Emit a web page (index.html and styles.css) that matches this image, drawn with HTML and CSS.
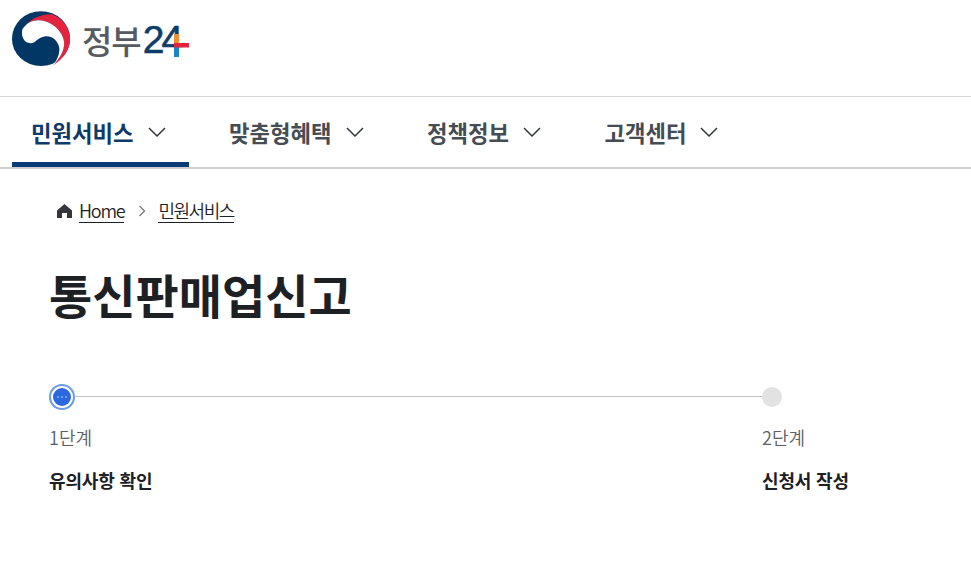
FILE: index.html
```html
<!DOCTYPE html>
<html lang="ko">
<head>
<meta charset="utf-8">
<title>통신판매업신고</title>
<link rel="stylesheet" href="styles.css">
</head>
<body>
<header class="top">
  <a class="logo">
    <svg class="mark" width="66" height="66" viewBox="0 0 200 200">
      <ellipse cx="100" cy="99" rx="88" ry="83" fill="#003764"/>
      <path d="M44 70C62 40 100 24 132 25C168 36 190 70 188 105C186 135 165 162 135 181C155 162 172 135 170 110C168 80 135 45 95 43C75 42 55 52 44 70Z" fill="#e4233f"/>
      <path d="M44 70C38 90 48 113 68 113C85 113 92 93 115 92C135 91 150 105 155 125C158 140 150 165 135 181C155 162 172 135 170 110C168 80 135 45 95 43C75 42 55 52 44 70Z" fill="#fff"/>
    </svg>
    <span class="logo-ko">정부</span><span class="logo-num">24</span>
    <svg class="plus" width="15" height="23" viewBox="0 0 15 23">
      <rect x="0" y="0" width="5" height="10" fill="#ee8f33"/>
      <rect x="0" y="13" width="5" height="10" fill="#1b84c4"/>
      <rect x="0" y="9" width="15" height="4.500" fill="#e4233f"/>
    </svg>
  </a>
</header>
<nav class="gnb">
  <a class="tab active"><span>민원서비스</span><svg class="chev" width="18" height="10" viewBox="0 0 18 10"><path d="M1 1l8 8 8-8" fill="none" stroke="currentColor" stroke-width="1.500"/></svg></a>
  <a class="tab"><span>맞춤형혜택</span><svg class="chev" width="18" height="10" viewBox="0 0 18 10"><path d="M1 1l8 8 8-8" fill="none" stroke="currentColor" stroke-width="1.500"/></svg></a>
  <a class="tab"><span>정책정보</span><svg class="chev" width="18" height="10" viewBox="0 0 18 10"><path d="M1 1l8 8 8-8" fill="none" stroke="currentColor" stroke-width="1.500"/></svg></a>
  <a class="tab"><span>고객센터</span><svg class="chev" width="18" height="10" viewBox="0 0 18 10"><path d="M1 1l8 8 8-8" fill="none" stroke="currentColor" stroke-width="1.500"/></svg></a>
</nav>
<main class="content">
  <div class="crumbs">
    <svg class="home" width="15" height="14" viewBox="0 0 15 14"><path d="M7.500 0L0 6.500V14h5V9h5v5h5V6.500z" fill="#33363d"/></svg>
    <a class="crumb crumb-en">Home</a>
    <svg class="sep" width="8" height="12" viewBox="0 0 8 12"><path d="M1.500 1l5 5-5 5" fill="none" stroke="#777" stroke-width="1.300"/></svg>
    <a class="crumb">민원서비스</a>
  </div>
  <h1 class="title">통신판매업신고</h1>
  <ol class="steps">
    <li class="step step-first">
      <div class="track">
        <span class="dot-now"><span class="dot-core"><i></i><i></i><i></i></span></span>
        <span class="line"></span>
      </div>
      <p class="num">1단계</p>
      <p class="name">유의사항 확인</p>
    </li>
    <li class="step">
      <div class="track">
        <span class="dot-next"></span>
      </div>
      <p class="num">2단계</p>
      <p class="name">신청서 작성</p>
    </li>
  </ol>
</main>
</body>
</html>
```
FILE: styles.css
```css
* { box-sizing: border-box; }
html, body { margin: 0; padding: 0; background: #fff; }
body { font-family: "Noto Sans CJK KR", "Noto Sans", sans-serif; color: #1e2124; overflow: hidden; }

.top { height: 97px; border-bottom: 1px solid #d6d6d6; padding: 6px 0 0 8px; }
.logo { display: flex; align-items: flex-start; }
.mark { flex: none; }
.logo-ko { margin: 12px 0 0 8px; font-size: 33px; line-height: 44px; color: #565b60; font-weight: 500; letter-spacing: -1px; }
.logo-num { margin: 11px 0 0 2px; font-family: "Liberation Sans", sans-serif; font-size: 39px; line-height: 46px; color: #0e3d6b; letter-spacing: -3px; -webkit-text-stroke: .6px #0e3d6b; }
.plus { margin: 28px 0 0 -6px; flex: none; }

.gnb { height: 72px; border-bottom: 2px solid #cfcfcf; padding-left: 12px; display: flex; gap: 21.4px; }
.tab { height: 70px; padding: 0 23px 0 19px; display: flex; align-items: center; gap: 14px; font-size: 22.3px; font-weight: 700; color: #464c53; border-top: 5px solid transparent; border-bottom: 5px solid transparent; }
.tab.active { color: #0f3a68; border-bottom-color: #0b3b75; }
.chev { color: #33363d; flex: none; }

.content { padding: 0 0 0 49px; }
.crumbs { display: flex; align-items: center; margin: 30px 0 0 8px; height: 24px; }
.home { flex: none; margin-right: 7px; }
.crumb { font-size: 18px; line-height: 23px; letter-spacing: -1.500px; color: #1e2124; border-bottom: 1px solid #1e2124; font-weight: 350; }
.crumb-en { letter-spacing: -1.200px; }
.sep { margin: 0 12px 0 14px; flex: none; }
.title { margin: 37px 0 0; font-size: 47px; line-height: 68px; font-weight: 700; color: #1e2124; }

.steps { list-style: none; margin: 56px 0 0; padding: 0; display: flex; }
.step-first { width: 713px; flex: none; }
.track { display: flex; align-items: center; height: 26px; }
.dot-now { width: 26px; height: 26px; border-radius: 50%; border: 2px solid #6a9be8; background: #fff; display: flex; align-items: center; justify-content: center; flex: none; }
.dot-core { width: 18px; height: 18px; border-radius: 50%; background: #2b68e0; display: flex; align-items: center; justify-content: center; gap: 1.500px; }
.dot-core i { width: 2.500px; height: 2.500px; border-radius: 50%; background: #8fb3f5; }
.line { flex: 1; height: 1px; margin-top: -1px; background: #c4c4c4; }
.dot-next { width: 20px; height: 20px; border-radius: 50%; background: #e2e2e2; }
.num { margin: 14px 0 0; font-size: 18px; line-height: 26px; color: #5a6066; font-weight: 350; }
.name { margin: 17px 0 0; font-size: 18px; line-height: 26px; font-weight: 700; color: #1e2124; letter-spacing: -.15px; }
```
